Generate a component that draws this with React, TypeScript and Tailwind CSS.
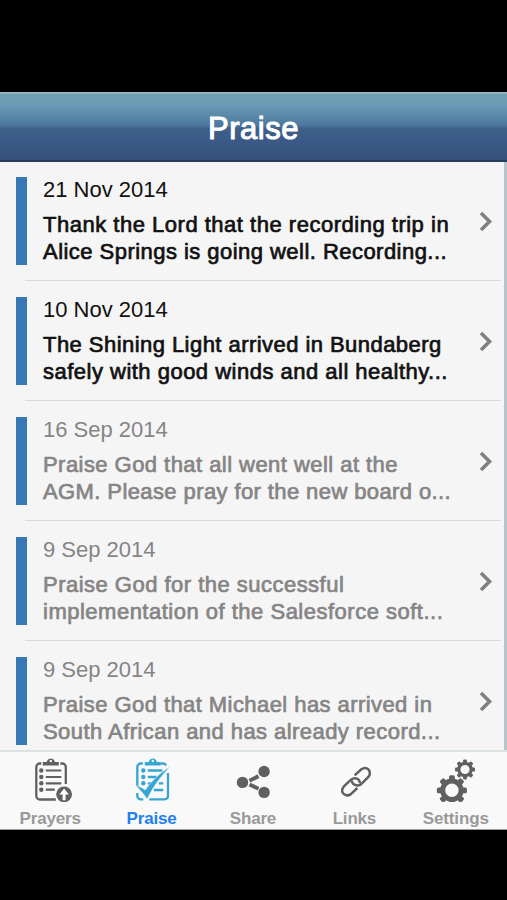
import type { ReactNode } from "react";
import clsx from "clsx";

type Item = {
  date: string;
  lines: { text: string; tracking: string }[];
  unread: boolean;
};

const items: Item[] = [
  {
    date: "21 Nov 2014",
    lines: [
      { text: "Thank the Lord that the recording trip in", tracking: "tracking-[0.51px]" },
      { text: "Alice Springs is going well. Recording...", tracking: "tracking-[0.46px]" },
    ],
    unread: true,
  },
  {
    date: "10 Nov 2014",
    lines: [
      { text: "The Shining Light arrived in Bundaberg", tracking: "tracking-[0.45px]" },
      { text: "safely with good winds and all healthy...", tracking: "tracking-[0.49px]" },
    ],
    unread: true,
  },
  {
    date: "16 Sep 2014",
    lines: [
      { text: "Praise God that all went well at the", tracking: "tracking-[0.45px]" },
      { text: "AGM. Please pray for the new board o...", tracking: "tracking-[0.4px]" },
    ],
    unread: false,
  },
  {
    date: "9 Sep 2014",
    lines: [
      { text: "Praise God for the successful", tracking: "tracking-[0.48px]" },
      { text: "implementation of the Salesforce soft...", tracking: "tracking-[0.5px]" },
    ],
    unread: false,
  },
  {
    date: "9 Sep 2014",
    lines: [
      { text: "Praise God that Michael has arrived in", tracking: "tracking-[0.43px]" },
      { text: "South African and has already record...", tracking: "tracking-[0.44px]" },
    ],
    unread: false,
  },
];

const ClipboardLines = () => (
  <>
    <path
      d="M12.5 11.500V8h4c.4-2.200 1.900-3.500 4-3.500s3.600 1.300 4 3.500h4v3.500z"
      fill="currentColor"
    />
    <circle cx="20.500" cy="7" r="1.200" fill="#f9f9f9" />
    <g fill="currentColor">
      <circle cx="11" cy="16.500" r="2.200" />
      <circle cx="11" cy="23" r="2.200" />
      <circle cx="11" cy="29.300" r="2.200" />
    </g>
  </>
);

const PrayersIcon = () => (
  <svg className="h-12 w-11" viewBox="-1.3 0 44 48" fill="none">
    <path
      d="M11 9.500H9.500a3.500 3.500 0 0 0-3.500 3.500v29a3.500 3.500 0 0 0 3.500 3.500h16M30 9.500h2a3.500 3.500 0 0 1 3.500 3.500v17"
      stroke="currentColor"
      strokeWidth="2.300"
    />
    <ClipboardLines />
    <circle cx="11" cy="35.700" r="2.200" fill="currentColor" />
    <path d="M15.500 16.500H31M15.500 23H31M15.500 29.300H31M15.500 35.700H24.500" stroke="currentColor" strokeWidth="2.200" />
    <circle cx="33.800" cy="40.300" r="7.900" fill="currentColor" />
    <path d="M32.300 46.300V40.500h-3.300l4.800-6 4.800 6h-3.300v5.800z" fill="#fff" />
  </svg>
);

const PraiseIcon = () => (
  <svg className="h-12 w-11" viewBox="-0.8 0 44 48" fill="none">
    <path
      d="M12 9.500H10A3.500 3.500 0 0 0 6.500 13v19M30 9.500h2a3.500 3.500 0 0 1 3.400 2M37.200 19v23A3.500 3.500 0 0 1 33.700 45.300H18.500M6.500 39v2.500A3.500 3.500 0 0 0 10 45.300h2.500"
      stroke="currentColor"
      strokeWidth="2.300"
    />
    <g transform="translate(1.500 0)">
      <ClipboardLines />
    </g>
    <path d="M17 16.500h14.500M17 23h8.500M17 29.300h3.500M28 29.300h4.500M23 36h9.500" stroke="currentColor" strokeWidth="2.300" />
    <path d="M5 31.500c3.500.8 6.500 2.200 9.500 4.600C21 26.500 29 19 39.500 12.500 29.800 22.500 22.500 32.500 16.400 45 13.500 40.500 9.500 36 5 31.500z" fill="currentColor" stroke="#f9f9f9" strokeWidth="0.400" />
  </svg>
);

const ShareIcon = () => (
  <svg className="h-12 w-11" viewBox="0.5 0.3 44 48">
    <path d="M19 27l9-4.600M19 30.800l9 4.200" stroke="currentColor" strokeWidth="4" />
    <circle cx="12" cy="28.700" r="5.700" fill="currentColor" />
    <circle cx="33.600" cy="17.800" r="5.700" fill="currentColor" />
    <circle cx="33.600" cy="38.700" r="5.700" fill="currentColor" />
  </svg>
);

const LinksIcon = () => (
  <svg className="h-12 w-11" viewBox="-6 -18 132 144" fill="none" stroke="currentColor" strokeWidth="7.500">
    <path d="M67 84L47 103Q35 110 25 101Q17 91 26 80L48 59Q60 50 71 59Q75 64 75 70" />
    <path d="M59 46L79 28Q91 20 101 29Q109 40 100 51L78 73Q66 80 55 72Q51 68 50 62" />
  </svg>
);

const teeth = [0, 45, 90, 135, 180, 225, 270, 315];

const SettingsIcon = () => (
  <svg className="h-12 w-11" viewBox="0.8 0 44 48" fill="none">
    <g transform="translate(18.700 36.300)">
      <circle r="9.200" stroke="currentColor" strokeWidth="5" />
      {teeth.map((a) => (
        <rect key={a} x="-2.900" y="-15" width="5.800" height="6" rx="1.500" transform={`rotate(${a})`} fill="currentColor" />
      ))}
    </g>
    <g transform="translate(31.800 15.500)">
      <circle r="6.200" stroke="currentColor" strokeWidth="3.200" />
      {teeth.map((a) => (
        <rect key={a} x="-1.900" y="-10" width="3.800" height="4" rx="1" transform={`rotate(${a})`} fill="currentColor" />
      ))}
    </g>
  </svg>
);

const tabs: { label: string; icon: ReactNode; tracking: string }[] = [
  { label: "Prayers", icon: <PrayersIcon />, tracking: "tracking-[-0.15px]" },
  { label: "Praise", icon: <PraiseIcon />, tracking: "tracking-[-0.15px]" },
  { label: "Share", icon: <ShareIcon />, tracking: "tracking-[-0.2px]" },
  { label: "Links", icon: <LinksIcon />, tracking: "tracking-[-0.2px]" },
  { label: "Settings", icon: <SettingsIcon />, tracking: "tracking-[-0.1px]" },
];

const PraiseRow = ({ item }: { item: Item }) => (
  <li className="flex h-[120px] shrink-0 flex-col">
    <div className="flex flex-1 pl-4">
      <div className="mt-4 h-[88px] w-[11px] shrink-0 bg-[#3878b4]" />
      <div className={clsx("ml-4 w-[422px] whitespace-nowrap text-[22px]", item.unread ? "text-[#111]" : "text-[#858585]")}>
        <p className="mt-[15px] leading-[27px]">{item.date}</p>
        <div className="mt-2 leading-[27px] [-webkit-text-stroke:0.7px_currentColor]">
          {item.lines.map((line) => (
            <p key={line.text} className={line.tracking}>
              {line.text}
            </p>
          ))}
        </div>
      </div>
      <svg className="mt-[49px] ml-3 h-6 w-4 shrink-0 text-[#808080]" viewBox="0 0 16 24" fill="none">
        <path d="M4 3l8.500 8.500L4 20" stroke="currentColor" strokeWidth="3.600" />
      </svg>
    </div>
    <div className="mr-[3px] ml-[25px] h-[1.500px] shrink-0 bg-[#d9dbdb]" />
  </li>
);

const App = () => {
  const active = "Praise";

  return (
    <div className="flex h-[900px] w-[507px] flex-col overflow-hidden bg-black pt-[92px] font-['Liberation_Sans',Arial,sans-serif]">
      <header className="flex h-[70px] shrink-0 items-center justify-center border-t-2 border-b-2 border-t-[#8fb5c4] border-b-[#263d5c] bg-[linear-gradient(#70a1b6_0%,#689ab3_18%,#4d769f_48%,#3e6089_52%,#3c5a88_70%,#34507a_100%)]">
        <h1 className="pt-1 text-[31px] leading-9 tracking-[0.5px] text-white [-webkit-text-stroke:1px_currentColor]">
          Praise
        </h1>
      </header>
      <main className="h-[588px] shrink-0 overflow-hidden border-r-[3px] border-[#b4c5cb] bg-[#f5f5f5]">
        <ul className="-mt-px flex flex-col">
          {items.map((item, i) => (
            <PraiseRow key={i} item={item} />
          ))}
        </ul>
      </main>
      <nav className="grid h-[80px] shrink-0 grid-cols-5 border-t-2 border-b border-t-[#dde2e2] border-b-[#9b9b9b] bg-[#f9f9f9]">
        {tabs.map((tab) => (
          <a
            key={tab.label}
            className={clsx("flex flex-col items-center pt-[2px]", tab.label === active ? "text-[#36a5d3]" : "text-[#606060]")}
          >
            {tab.icon}
            <span
              className={clsx(
                "mt-[7px] mr-px text-[17px] leading-5 font-bold",
                tab.tracking,
                tab.label === active ? "text-[#2180ee]" : "text-[#999]"
              )}
            >
              {tab.label}
            </span>
          </a>
        ))}
      </nav>
    </div>
  );
};

export default App;
